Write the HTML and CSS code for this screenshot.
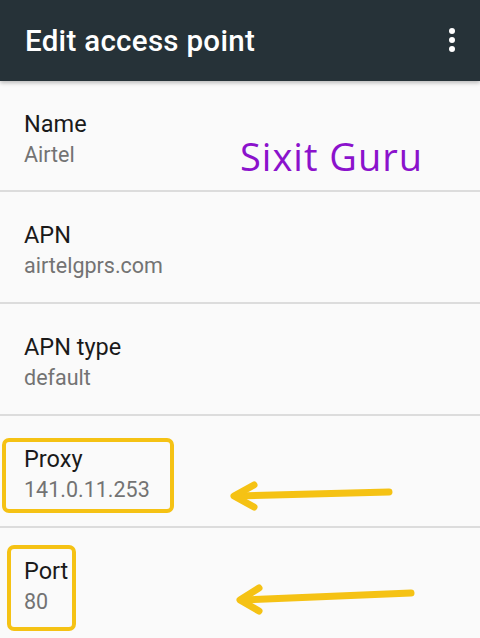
FILE: index.html
```html
<!DOCTYPE html>
<html>
<head>
<meta charset="utf-8">
<link rel="stylesheet" href="styles.css">
</head>
<body>
<div class="screen">
  <header class="appbar">
    <h1 class="title">Edit access point</h1>
    <svg class="menu" width="12" height="28" viewBox="0 0 12 28">
      <circle cx="6" cy="5" r="3" fill="#fff"/>
      <circle cx="6" cy="14" r="3" fill="#fff"/>
      <circle cx="6" cy="23" r="3" fill="#fff"/>
    </svg>
  </header>
  <ul class="list">
    <li class="row">
      <div class="label">Name</div>
      <div class="value">Airtel</div>
      <div class="watermark">Sixit Guru</div>
    </li>
    <li class="row">
      <div class="label">APN</div>
      <div class="value">airtelgprs.com</div>
    </li>
    <li class="row">
      <div class="label">APN type</div>
      <div class="value">default</div>
    </li>
    <li class="row">
      <div class="label">Proxy</div>
      <div class="value">141.0.11.253</div>
    </li>
    <li class="row">
      <div class="label">Port</div>
      <div class="value">80</div>
    </li>
  </ul>
  <div class="mark box-proxy"></div>
  <div class="mark box-port"></div>
  <svg class="arrows" width="480" height="638" viewBox="0 0 480 638">
    <g stroke="#f5c214" stroke-width="7" stroke-linecap="round" stroke-linejoin="round" fill="none">
      <path d="M389 492 L236 496"/>
      <path d="M254 485 L234 496 L254 507"/>
      <path d="M411 593 L242 600"/>
      <path d="M259 588 L240 600 L259 611"/>
    </g>
  </svg>
</div>
</body>
</html>
```
FILE: styles.css
```css
* { box-sizing: border-box; }
html, body { margin: 0; padding: 0; }
body {
  width: 480px;
  height: 638px;
  overflow: hidden;
  background: #fafafa;
  font-family: Roboto, "Noto Sans", sans-serif;
}
.screen {
  position: relative;
  width: 480px;
  height: 638px;
  overflow: hidden;
}
.appbar {
  height: 81px;
  background: #263238;
  display: flex;
  align-items: center;
  justify-content: space-between;
  padding: 0 22px 0 25px;
  box-shadow: 0 2px 4px rgba(0,0,0,0.25);
  position: relative;
  z-index: 1;
}
.title {
  margin: 0;
  color: #fff;
  font-weight: 500;
  font-size: 29.5px;
  letter-spacing: 0.3px;
}
.menu { display: block; margin-top: -1px; }
.list {
  list-style: none;
  margin: 0;
  padding: 0;
}
.row {
  position: relative;
  height: 112px;
  padding: 28px 0 0 24px;
  border-bottom: 2px solid #dcdcdc;
}
.row:first-child { height: 111px; padding-top: 28px; }
.label {
  font-size: 23.5px;
  line-height: 30px;
  color: #1a1a1a;
}
.value {
  font-size: 21.5px;
  line-height: 30px;
  margin-top: 1px;
  color: #737373;
}
.watermark {
  position: absolute;
  left: 240px;
  top: 53px;
  font-family: "Open Sans", "DejaVu Sans", sans-serif;
  font-size: 38px;
  line-height: 44px;
  color: #8b12cc;
  letter-spacing: 1px;
}
.mark {
  position: absolute;
  border: 4px solid #f5c214;
  border-radius: 7px;
}
.box-proxy { left: 2px; top: 438px; width: 172px; height: 75px; }
.box-port { left: 7px; top: 545px; width: 69px; height: 86px; }
.arrows { position: absolute; left: 0; top: 0; }
```
